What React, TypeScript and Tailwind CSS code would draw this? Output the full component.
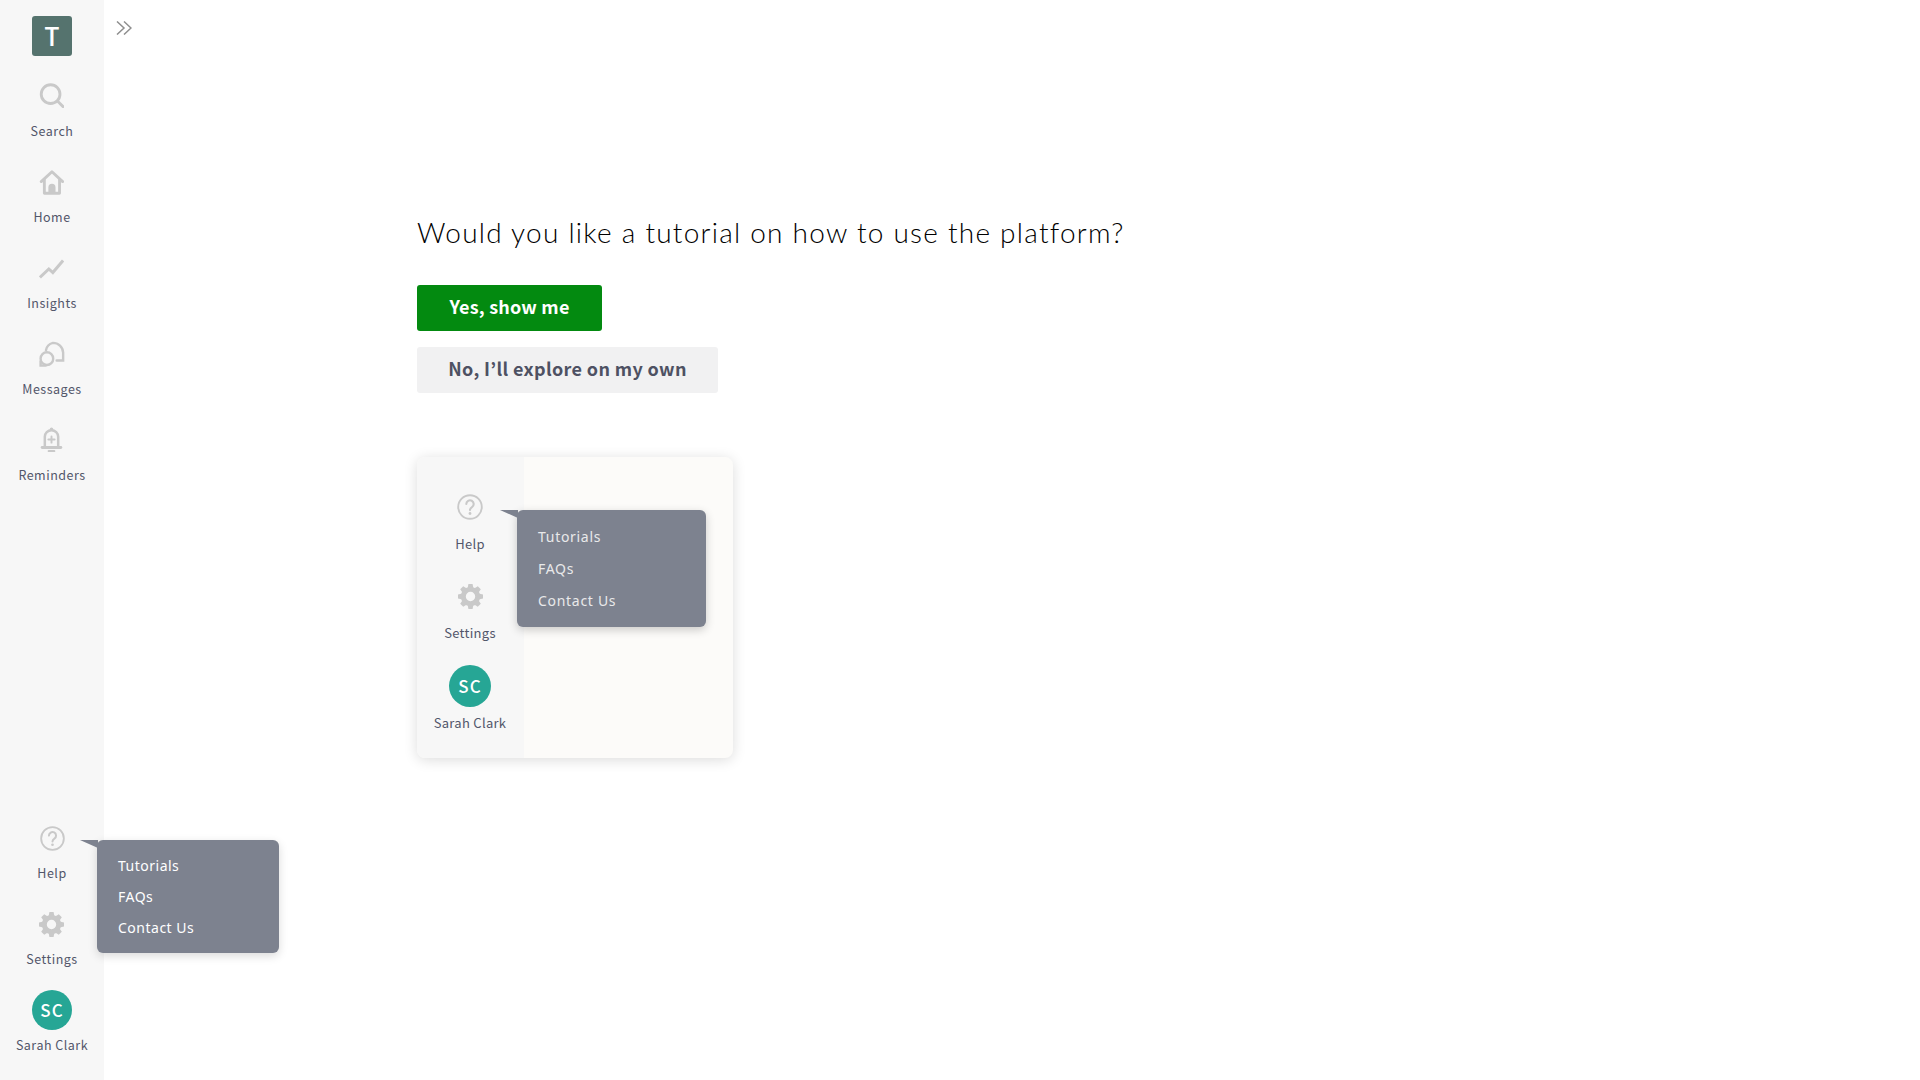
import React from "react";

const C = "#c9c9c9";
const font = { fontFamily: '"Noto Sans CJK JP", "Noto Sans", sans-serif' };

const SearchI = ({ s = 25 }: { s?: number }) => (
  <svg width={s} height={s} viewBox="0 0 28 28" fill="none" stroke={C} strokeWidth="3.2" strokeLinecap="round" className="-translate-y-[1px]">
    <circle cx="13" cy="12.5" r="10.5" />
    <path d="M21.5 21l5.5 5.500" />
  </svg>
);
const HomeI = ({ s = 25 }: { s?: number }) => (
  <svg width={s} height={s} viewBox="0 0 28 28" fill="none" stroke={C} strokeWidth="3.2" strokeLinejoin="round" strokeLinecap="round">
    <path d="M2.500 13L14.500 2l12 11" />
    <path d="M6 11v15h17V11" />
    <path d="M10.500 26v-6.500a4 4 0 0 1 8 0V26z" fill={C} stroke="none" />
  </svg>
);
const InsightsI = ({ s = 25 }: { s?: number }) => (
  <svg width={s} height={s} viewBox="0 0 28 28" fill="none" stroke={C} strokeWidth="3.4" strokeLinejoin="miter">
    <path d="M1 24l10-9.500 4.500 4L27 5" />
  </svg>
);
const MessagesI = ({ s = 26 }: { s?: number }) => (
  <svg width={s} height={s} viewBox="0 0 28 28" fill="none" stroke={C} strokeWidth="2.6" strokeLinecap="round">
    <path d="M7.500 10A10 10 0 0 1 15 2a11 11 0 0 1 11 10.500V21h-7" />
    <circle cx="8.500" cy="19" r="6.800" />
    <path d="M1.700 22v4.500h5.500" />
  </svg>
);
const BellI = ({ s = 25 }: { s?: number }) => (
  <svg width={s} height={s} viewBox="0 0 28 28" fill="none" stroke={C} strokeWidth="2.8" strokeLinecap="round" className="-translate-y-[1px]">
    <path d="M6.500 22V11a7.500 7.500 0 0 1 15 0v11" />
    <path d="M3.500 23h21" strokeWidth="3.2" />
    <circle cx="14" cy="2.500" r="2" fill={C} stroke="none" />
    <path d="M11 27h6" strokeWidth="2.600" />
    <path d="M10.500 14h7M14 10.500v7" strokeWidth="2.200" />
  </svg>
);
const HelpI = ({ s = 25 }: { s?: number }) => (
  <svg width={s} height={s} viewBox="0 0 26 26" fill="none" stroke={C} strokeWidth="1.9" strokeLinecap="round">
    <circle cx="13" cy="13" r="11.800" />
    <path d="M9.300 10a3.700 3.700 0 1 1 5.700 3.100c-1.300.8-2 1.500-2 3" strokeWidth="2.100" />
    <circle cx="13" cy="19.500" r="1.400" fill={C} stroke="none" />
  </svg>
);
const GearI = ({ s = 25 }: { s?: number }) => (
  <svg width={s} height={s} viewBox="0 0 24 24" fill={C}>
    <path fillRule="evenodd" d="M10 0h4l.6 3.100c.6.2 1.200.5 1.700.8L19 2.100 21.900 5l-1.800 2.700c.3.500.6 1.100.8 1.700L24 10v4l-3.100.6c-.2.600-.5 1.200-.8 1.700l1.800 2.700L19 21.900l-2.700-1.800c-.5.300-1.100.6-1.700.8L14 24h-4l-.6-3.100c-.6-.2-1.200-.5-1.700-.8L5 21.900 2.100 19l1.800-2.700c-.3-.5-.6-1.100-.8-1.700L0 14v-4l3.100-.6c.2-.6.5-1.200.8-1.700L2.100 5 5 2.100l2.700 1.800c.5-.3 1.100-.6 1.700-.8L10 0zm2 7.500a4.500 4.500 0 1 0 0 9 4.500 4.500 0 0 0 0-9z" />
  </svg>
);

function NavItem({ icon, label, card }: { icon: React.ReactNode; label: string; card?: boolean }) {
  return (
    <div className="flex flex-col items-center">
      <div className="flex h-[40px] w-[40px] items-center justify-center">{icon}</div>
      <div className={card ? "mt-[7px] text-[13px] leading-[20px] tracking-[0.3px] text-[#52566a] whitespace-nowrap" : "mt-[5px] text-[12.5px] leading-[20px] tracking-[0.5px] text-[#52566a] whitespace-nowrap"}>{label}</div>
    </div>
  );
}

function Avatar({ card }: { card?: boolean }) {
  return (
    <div
      className={
        card
          ? "flex h-[42px] w-[42px] items-center justify-center rounded-full bg-[#26a695] text-[17px] font-medium tracking-[1px] text-white"
          : "flex h-[40px] w-[40px] items-center justify-center rounded-full bg-[#26a695] text-[17px] font-medium tracking-[1px] text-white"
      }
    >
      SC
    </div>
  );
}

function Menu({ card }: { card?: boolean }) {
  return (
    <div
      className={
        card
          ? "absolute left-[100px] top-[0px] flex h-[117px] w-[189px] flex-col gap-[6px] rounded-[6px] bg-[#7d828f] pl-[21px] pt-[14px] text-[14px] leading-[26px] tracking-[0.7px] text-[#e9e9ea] shadow-[0_3px_10px_rgba(0,0,0,0.2)]"
          : "absolute left-[97px] top-[0px] flex h-[113px] w-[182px] flex-col gap-[5px] rounded-[6px] bg-[#7d828f] pl-[21px] pt-[13px] text-[14px] leading-[26px] tracking-[0.5px] text-white shadow-[0_3px_10px_rgba(0,0,0,0.15)]"
      }
      style={{ fontFamily: '"Noto Sans", sans-serif' }}
    >
      <svg className="absolute -left-[17px] top-0" width="18" height="8" viewBox="0 0 18 8">
        <path d="M0 0H18V8z" fill="#7d828f" />
      </svg>
      <div className="h-[26px]">Tutorials</div>
      <div className="h-[26px]">FAQs</div>
      <div className="h-[26px]">Contact Us</div>
    </div>
  );
}

export default function App() {
  return (
    <div className="flex h-screen w-full overflow-hidden bg-white" style={font}>
      <aside className="relative flex h-full w-[104px] shrink-0 flex-col items-center justify-between bg-[#f7f7f7] pb-[25px] pt-[16px]">
        <div className="flex flex-col items-center">
          <div className="mb-[20px] flex h-[40px] w-[40px] items-center justify-center rounded-[3px] bg-[#55736e] pb-[1px] text-[25px] font-medium text-white">T</div>
          <div className="flex flex-col gap-[21px]">
            <NavItem icon={<SearchI />} label="Search" />
            <NavItem icon={<HomeI />} label="Home" />
            <NavItem icon={<InsightsI />} label="Insights" />
            <NavItem icon={<MessagesI />} label="Messages" />
            <NavItem icon={<BellI />} label="Reminders" />
          </div>
        </div>
        <div className="relative flex flex-col items-center gap-[21px]">
          <div className="absolute left-1/2 top-[22px] -ml-[52px] w-0">
            <Menu />
          </div>
          <NavItem icon={<HelpI />} label="Help" />
          <NavItem icon={<GearI />} label="Settings" />
          <div className="flex flex-col items-center">
            <Avatar />
            <div className="mt-[5px] text-[12.5px] leading-[20px] tracking-[0.5px] text-[#52566a]">Sarah Clark</div>
          </div>
        </div>
      </aside>
      <main className="relative min-w-0 flex-1">
        <svg className="absolute left-[12px] top-[21px]" width="16" height="14" viewBox="0 0 16 14" fill="none" stroke="#8f8f8f" strokeWidth="1.5">
          <path d="M1 .5l7 6.500-7 6.500M8 .5l7 6.500-7 6.500" />
        </svg>
        <div className="ml-[313px] pt-[212px]">
          <h1 className="text-[28px] font-light leading-[40px] tracking-[1.25px] text-black" style={{ fontFamily: "Lato, sans-serif" }}>
            Would you like a tutorial on how to use the platform?
          </h1>
          <div className="mt-[33px] flex flex-col items-start gap-[16px]">
            <button className="flex h-[46px] w-[185px] items-center justify-center rounded-[3px] bg-[#038a10] pb-[3px] text-[18px] font-semibold tracking-[0.2px] text-white">Yes, show me</button>
            <button className="flex h-[46px] w-[301px] items-center justify-center rounded-[3px] bg-[#f1f1f2] pb-[3px] text-[18px] font-semibold tracking-[0.35px] text-[#4e5163]">No, I’ll explore on my own</button>
          </div>
          <div className="mt-[64px] flex h-[301px] w-[316px] overflow-visible rounded-[8px] bg-[#fcfbf9] shadow-[0_2px_14px_rgba(0,0,0,0.14)]">
            <div className="relative flex w-[107px] shrink-0 flex-col items-center gap-[22px] rounded-l-[8px] bg-[#f7f7f7] pr-[1px] pt-[30px]">
              <div className="absolute left-0 top-[53px] w-0">
                <Menu card />
              </div>
              <NavItem card icon={<HelpI s={26} />} label="Help" />
              <NavItem card icon={<GearI />} label="Settings" />
              <div className="flex flex-col items-center">
                <Avatar card />
                <div className="mt-[6px] text-[13px] leading-[20px] tracking-[0.3px] text-[#52566a]">Sarah Clark</div>
              </div>
            </div>
            <div className="flex-1" />
          </div>
        </div>
      </main>
    </div>
  );
}
